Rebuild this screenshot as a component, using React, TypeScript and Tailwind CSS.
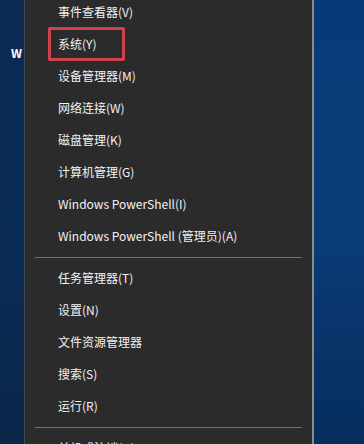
import React from 'react'

type Item = { label: string; boxed?: boolean }

const groups: Item[][] = [
  [
    { label: '事件查看器(V)' },
    { label: '系统(Y)', boxed: true },
    { label: '设备管理器(M)' },
    { label: '网络连接(W)' },
    { label: '磁盘管理(K)' },
    { label: '计算机管理(G)' },
    { label: 'Windows PowerShell(I)' },
    { label: 'Windows PowerShell (管理员)(A)' },
  ],
  [
    { label: '任务管理器(T)' },
    { label: '设置(N)' },
    { label: '文件资源管理器' },
    { label: '搜索(S)' },
    { label: '运行(R)' },
  ],
]

function MenuRow({ item }: { item: Item }) {
  return (
    <div className="relative flex h-8 items-center pl-[33px] text-[12px] text-[#f2f2f2]">
      {item.boxed ? (
        <div className="absolute left-[23px] top-[-1px] h-[34px] w-[77px] rounded-[2px] border-[3px] border-[#d0434c]" />
      ) : null}
      <span className="relative">{item.label}</span>
    </div>
  )
}

export default function App() {
  return (
    <div
      className="flex h-[444px] w-[364px] overflow-hidden bg-[#0a2f5c]"
      style={{ fontFamily: '"Noto Sans CJK SC", "Noto Sans", sans-serif' }}
    >
      {/* desktop strip on the left */}
      <div className="relative w-6 shrink-0 bg-gradient-to-b from-[#0b2a52] via-[#0a2d58] to-[#0a2548]">
        <span className="absolute left-[11px] top-[44px] text-[12px] font-semibold text-white">W</span>
      </div>
      <div className="w-px shrink-0 bg-[#3c4a5a]" />

      {/* context menu */}
      <div className="w-[287px] shrink-0 bg-[#2b2b2b]">
        <div className="-mt-1">
          {groups.map((group, gi) => (
            <div key={gi}>
              {group.map((item) => (
                <MenuRow key={item.label} item={item} />
              ))}
              <div className="flex h-2.5 items-center px-[10px]">
                <div className="h-px w-full bg-[#707070]" />
              </div>
            </div>
          ))}
          <div className="flex h-8 items-center justify-between pl-[33px] pr-[16px] text-[12px] text-[#f2f2f2]">
            <span>关机或注销(U)</span>
            <span className="text-[13px]">›</span>
          </div>
        </div>
      </div>

      <div className="w-[2px] shrink-0 bg-[#8c8c8c]" />
      {/* desktop strip on the right */}
      <div className="flex-1 bg-gradient-to-b from-[#073a78] via-[#0a3d78] to-[#062d5e]" />
    </div>
  )
}
